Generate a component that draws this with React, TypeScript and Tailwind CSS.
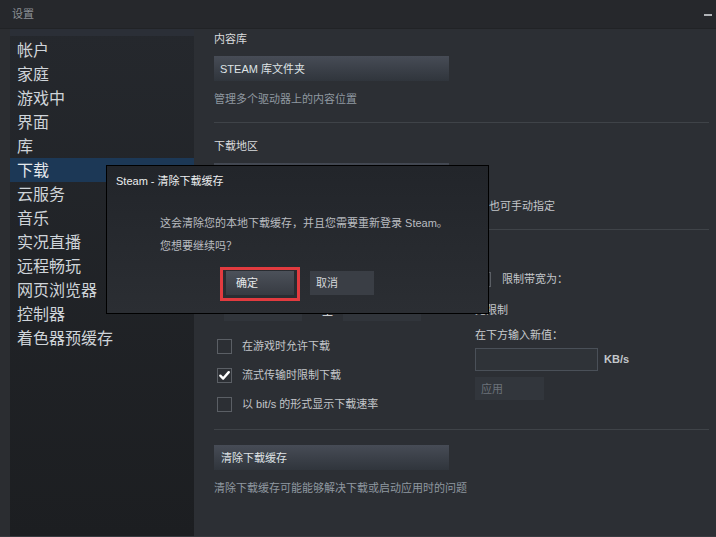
import React from 'react';

const navItems = [
  '帐户',
  '家庭',
  '游戏中',
  '界面',
  '库',
  '下载',
  '云服务',
  '音乐',
  '实况直播',
  '远程畅玩',
  '网页浏览器',
  '控制器',
  '着色器预缓存',
];

const checkRows = [
  { label: '在游戏时允许下载', checked: false },
  { label: '流式传输时限制下载', checked: true },
  { label: '以 bit/s 的形式显示下载速率', checked: false },
];

function CheckBox({ checked }: { checked?: boolean }) {
  return (
    <span className="flex h-[15px] w-[15px] shrink-0 items-center justify-center border border-[#5b5f65]">
      {checked && (
        <svg viewBox="0 0 14 14" className="h-[13px] w-[13px]">
          <path
            d="M2.5 7.2 L5.6 10.3 L11.6 3.4"
            fill="none"
            stroke="#ffffff"
            strokeWidth="2.6"
            strokeLinecap="round"
            strokeLinejoin="round"
          />
        </svg>
      )}
    </span>
  );
}

export default function App() {
  return (
    <div className="relative flex h-[537px] w-[716px] flex-col overflow-hidden border-b border-[#383b40] bg-[#2c2f34] font-['Liberation_Sans','Noto_Sans_CJK_SC',sans-serif] text-[11px]">
      {/* Title bar */}
      <div className="flex h-[29px] shrink-0 items-center justify-between border-b border-[#212326] bg-[#26282c] pl-[12px] pr-[4px]">
        <span className="text-[11px] text-[#8c9096]">设置</span>
        <span className="mb-[-2px] h-[2px] w-[8px] bg-[#b0b3b7]" />
      </div>

      <div className="flex min-h-0 flex-1">
        <div className="w-[10px] shrink-0 bg-[#2b2d31]" />

        {/* Sidebar */}
        <nav className="flex w-[184px] shrink-0 flex-col bg-gradient-to-b from-[#25282d] to-[#1c1e21]">
          <div className="h-[7px] bg-[#2b2f37]" />
          <ul className="pt-[2px]">
            {navItems.map((item) => (
              <li
                key={item}
                className={`h-[24px] pl-[7px] pt-[2px] text-[16px] leading-[24px] ${
                  item === '下载' ? 'bg-[#1c3856] text-[#e4e8ec]' : 'text-[#cfd4d9]'
                }`}
              >
                <span className="block leading-[22px]">{item}</span>
              </li>
            ))}
          </ul>
        </nav>

        {/* Content */}
        <main className="min-w-0 flex-1 pl-[20px] pr-[7px] pt-[2px]">
          <p className="h-[16px] leading-[16px] text-[#d9dbdd]">内容库</p>
          <button className="mt-[9px] flex h-[25px] w-[235px] items-center bg-gradient-to-b from-[#474c56] to-[#30353c] pl-[6px] pt-[2px] text-[11px] text-[#dfe3e6]">
            STEAM 库文件夹
          </button>
          <p className="mt-[10px] h-[16px] leading-[16px] text-[#8f98a0]">管理多个驱动器上的内容位置</p>
          <div className="mt-[15px] h-px bg-[#3f4348]" />

          <p className="mt-[15px] h-[16px] leading-[16px] text-[#d9dbdd]">下载地区</p>
          <div className="mt-[9px] h-[25px] w-[235px] bg-gradient-to-b from-[#434852] to-[#30353c]" />
          <p className="mt-[10px] h-[16px] whitespace-nowrap pl-[275px] leading-[16px] text-[#c3c6ca]">
            也可手动指定
          </p>
          <div className="mt-[15px] h-px bg-[#3f4348]" />

          {/* section heading sits under the dialog */}
          <div className="mt-[15px] h-[16px]" />

          <div className="mt-[10px] flex">
            <div className="w-[261px] shrink-0">
              <div className="h-[16px]" />
              <div className="mt-[10px] flex h-[24px] items-center pl-[10px]">
                <div className="h-[24px] w-[78px] bg-[#31353b]" />
                <span className="ml-[20px] h-[24px] w-[21px] pt-[3px] text-[11px] leading-[22px] text-[#e8eaec]">至</span>
                <div className="h-[24px] w-[78px] bg-[#31353b]" />
              </div>
              <div className="mt-[17px] flex flex-col gap-[13px] pl-[3px]">
                {checkRows.map((row) => (
                  <div key={row.label} className="flex h-[16px] items-center gap-[10px]">
                    <CheckBox checked={row.checked} />
                    <span className="leading-[16px] text-[#c3c6ca]">{row.label}</span>
                  </div>
                ))}
              </div>
            </div>

            <div className="flex-1">
              <div className="flex h-[16px] items-center gap-[11px] pl-[1px]">
                <CheckBox />
                <span className="leading-[16px] text-[#c3c6ca]">限制带宽为：</span>
              </div>
              <p className="mt-[15px] h-[16px] leading-[16px] text-[#c3c6ca]">无限制</p>
              <p className="mt-[9px] h-[16px] leading-[16px] text-[#c8cbce]">在下方输入新值：</p>
              <div className="mt-[5px] flex items-center">
                <div className="h-[23px] w-[123px] border border-[#4a5058] bg-[#2f3338]" />
                <span className="ml-[6px] text-[11px] font-bold text-[#c3c7cb]">KB/s</span>
              </div>
              <button className="mt-[6px] flex h-[23px] w-[69px] items-center bg-[#32363c] pl-[6px] pt-[2px] text-[11px] text-[#6c727a]">
                应用
              </button>
            </div>
          </div>

          <div className="mt-[17px] h-px bg-[#3f4348]" />
          <button className="mt-[15px] flex h-[25px] w-[235px] items-center bg-gradient-to-b from-[#474c56] to-[#30353c] pl-[7px] pt-[2px] text-[11px] text-[#dfe3e6]">
            清除下载缓存
          </button>
          <p className="mt-[10px] h-[16px] leading-[16px] text-[#8f98a0]">清除下载缓存可能能够解决下载或启动应用时的问题</p>
        </main>
      </div>

      {/* Confirm dialog */}
      <div className="absolute left-[106px] top-[165px] h-[149px] w-[383px] border border-black bg-gradient-to-b from-[#22252a] to-[#2b2e33] pl-[9px] pt-[7px]">
        <p className="h-[16px] leading-[16px] text-[#eceeef]">Steam - 清除下载缓存</p>
        <div className="pl-[44px]">
          <p className="mt-[26px] h-[16px] leading-[16px] text-[#b9bcc0]">
            这会清除您的本地下载缓存，并且您需要重新登录 Steam。
          </p>
          <p className="mt-[7px] h-[16px] leading-[16px] text-[#b9bcc0]">您想要继续吗？</p>
        </div>
        <div className="mt-[17px] flex pl-[110px]">
          <div className="relative">
            <button className="flex h-[24px] w-[68px] items-center bg-gradient-to-b from-[#4c515a] to-[#373b42] pl-[10px] pt-[1px] text-[11px] text-[#e6e8ea]">
              确定
            </button>
            <span className="pointer-events-none absolute -bottom-[6px] -left-[6px] -right-[6px] -top-[4px] border-[3px] border-[#e23b3f]" />
          </div>
          <button className="ml-[16px] flex h-[24px] w-[64px] items-center bg-[#3a3e45] pl-[6px] pt-[1px] text-[11px] text-[#d5d8db]">
            取消
          </button>
        </div>
      </div>
    </div>
  );
}
